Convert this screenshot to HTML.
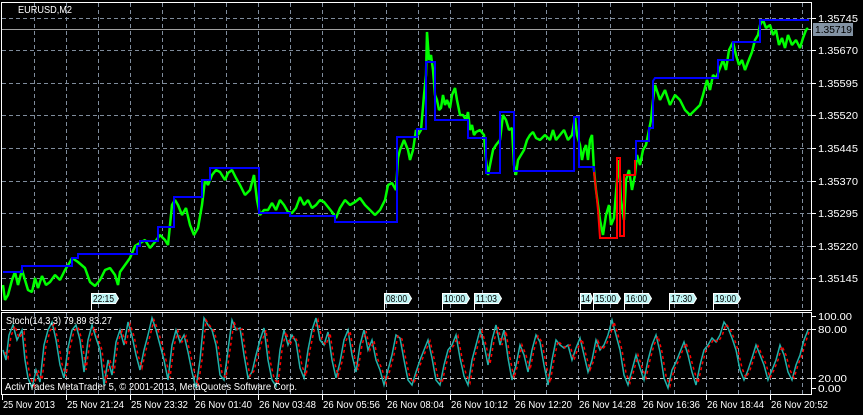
<!DOCTYPE html>
<html><head><meta charset="utf-8"><style>
body{margin:0;background:#000;width:863px;height:415px;overflow:hidden;font-family:"Liberation Sans",sans-serif}
svg{display:block}
text{font-family:"Liberation Sans",sans-serif;font-size:10px;fill:#fff}
</style></head><body>
<svg width="863" height="415" xmlns="http://www.w3.org/2000/svg">
<rect width="863" height="415" fill="#000"/>
<g stroke="#7f8c9c" stroke-dasharray="4,3" stroke-width="1">
<path d="M34.5 3V310M66.5 3V310M98.5 3V310M130.5 3V310M162.5 3V310M194.5 3V310M226.5 3V310M258.5 3V310M290.5 3V310M322.5 3V310M354.5 3V310M386.5 3V310M418.5 3V310M450.5 3V310M482.5 3V310M514.5 3V310M546.5 3V310M578.5 3V310M610.5 3V310M642.5 3V310M674.5 3V310M706.5 3V310M738.5 3V310M770.5 3V310M802.5 3V310"/>
<path d="M34.5 313V394M66.5 313V394M98.5 313V394M130.5 313V394M162.5 313V394M194.5 313V394M226.5 313V394M258.5 313V394M290.5 313V394M322.5 313V394M354.5 313V394M386.5 313V394M418.5 313V394M450.5 313V394M482.5 313V394M514.5 313V394M546.5 313V394M578.5 313V394M610.5 313V394M642.5 313V394M674.5 313V394M706.5 313V394M738.5 313V394M770.5 313V394M802.5 313V394"/>
<path d="M2 18.5H811M2 50.5H811M2 83.5H811M2 115.5H811M2 148.5H811M2 181.5H811M2 213.5H811M2 246.5H811M2 278.5H811"/>
</g>
<g stroke="#c8c8c8" stroke-dasharray="4,3"><path d="M2 329.5H811M2 378.5H811"/></g>
<path d="M2 29.5H811" stroke="#a0a0a0"/>
<polyline fill="none" stroke="#00ff00" stroke-width="2.5" stroke-linejoin="bevel" points="3,285 5,300 8,295 12,280 15,272 18,285 22,270 25,280 28,290 32,292 35,278 38,288 42,276 46,285 50,282 55,275 60,280 65,270 70,262 72,258 78,262 85,268 90,282 95,286 100,280 105,270 110,268 115,275 118,285 120,272 125,265 130,258 135,246 140,243 145,240 150,248 155,242 160,235 165,240 168,245 172,205 175,200 178,205 182,215 186,208 190,225 194,235 198,228 202,205 205,180 208,185 212,175 216,170 220,172 225,180 228,173 232,170 236,178 240,185 245,195 250,190 254,175 257,200 260,215 264,210 268,210 272,203 276,210 280,200 284,205 288,212 292,213 296,208 300,197 304,205 308,200 312,208 316,205 320,200 324,202 328,207 332,212 336,218 340,208 345,200 350,205 355,202 360,198 365,205 370,210 375,215 380,210 385,200 388,185 392,183 396,190 398,158 400,150 404,140 408,150 410,160 413,150 416,130 418,135 421,130 424,95 426,75 427,32 429,60 431,55 433,70 435,95 437,100 439,110 441,108 443,95 445,105 447,100 450,108 452,95 455,88 457,100 460,115 463,115 466,120 468,112 470,130 472,125 474,135 476,132 480,130 484,135 486,160 488,175 490,165 493,150 496,145 500,140 503,115 506,120 509,130 512,128 514,165 516,175 518,160 521,155 524,150 527,140 530,135 533,132 536,138 540,140 545,135 550,140 553,130 556,140 560,135 564,130 568,140 572,135 575,117 577,135 580,145 582,160 584,150 586,145 588,160 590,140 592,135 594,170 596,190 598,205 600,220 603,235 606,215 609,205 611,225 614,218 617,180 619,160 621,200 624,220 626,180 629,170 632,190 635,175 637,155 640,165 643,150 646,145 649,130 651,120 653,100 655,85 660,100 665,90 670,105 675,95 680,100 685,110 690,115 695,110 700,105 703,95 707,80 710,90 713,75 716,78 720,68 723,60 726,70 729,50 733,42 736,55 739,65 742,60 745,70 748,62 752,52 755,40 758,35 760,25 763,20 766,28 770,25 773,35 776,30 779,45 782,38 785,48 788,35 792,45 796,40 800,48 803,38 806,30 808,28"/>
<polyline fill="none" stroke="#0000ff" stroke-width="2" points="3,272 22,272 22,266 72,266 72,258 78,258 78,254 137,254 137,246 140,246 140,241 158,241 158,227 174,227 174,197 202,197 202,180 210,180 210,168 259,168 259,213 290,213 290,216 335,216 335,222 397,222 397,137 417,137 417,129 426,129 426,62 435,62 435,120 468,120 468,138 486,138 486,173 500,173 500,112 514,112 514,171 574,171 574,117 579,117 579,167 594,167 594,172"/>
<polyline fill="none" stroke="#ff0000" stroke-width="2" points="594,172 596,190 598,210 600,238 617,238 617,158 620,158 620,236 624,236 624,175 635,175 635,160"/>
<polyline fill="none" stroke="#0000ff" stroke-width="2" points="636,160 636,141 649,141 649,128 653,128 653,81 655,78 718,78 718,60 733,60 733,42 760,42 760,20 809,20"/>
<g stroke="#fff" fill="none"><rect x="1.5" y="2.5" width="810" height="308"/><rect x="1.5" y="312.5" width="810" height="82"/></g>
<g stroke="#fff" fill="none" stroke-width="1"><path d="M812 18.5h4M812 50.5h4M812 83.5h4M812 115.5h4M812 148.5h4M812 181.5h4M812 213.5h4M812 246.5h4M812 278.5h4M812 316.5h4M812 329.5h4M812 378.5h4M812 388.5h4"/></g>
<text x="18" y="13" textLength="54" lengthAdjust="spacingAndGlyphs">EURUSD,M2</text>
<g><text x="818" y="22" textLength="40" lengthAdjust="spacingAndGlyphs">1.35745</text><text x="818" y="54" textLength="40" lengthAdjust="spacingAndGlyphs">1.35670</text><text x="818" y="87" textLength="40" lengthAdjust="spacingAndGlyphs">1.35595</text><text x="818" y="119" textLength="40" lengthAdjust="spacingAndGlyphs">1.35520</text><text x="818" y="152" textLength="40" lengthAdjust="spacingAndGlyphs">1.35445</text><text x="818" y="185" textLength="40" lengthAdjust="spacingAndGlyphs">1.35370</text><text x="818" y="217" textLength="40" lengthAdjust="spacingAndGlyphs">1.35295</text><text x="818" y="250" textLength="40" lengthAdjust="spacingAndGlyphs">1.35220</text><text x="818" y="282" textLength="40" lengthAdjust="spacingAndGlyphs">1.35145</text>
<text x="818" y="320" textLength="34" lengthAdjust="spacingAndGlyphs">100.00</text><text x="818" y="333" textLength="29" lengthAdjust="spacingAndGlyphs">80.00</text><text x="818" y="382" textLength="29" lengthAdjust="spacingAndGlyphs">20.00</text><text x="818" y="392" textLength="23" lengthAdjust="spacingAndGlyphs">0.00</text></g>
<rect x="813" y="23" width="40" height="13" fill="#8393a4"/><text x="815" y="33" textLength="37" lengthAdjust="spacingAndGlyphs" style="fill:#000">1.35719</text>
<g fill="#bff4f4" stroke="#fff">
<path d="M91.5 293.5h24l3 5-3 5h-24z"/><path d="M384.5 293.5h24l3 5-3 5h-24z"/><path d="M442.5 293.5h24l3 5-3 5h-24z"/><path d="M474.5 293.5h24l3 5-3 5h-24z"/><path d="M580.5 293.5h10l2 5-2 5h-10z"/><path d="M593.5 293.5h24l3 5-3 5h-24z"/><path d="M624.5 293.5h24l3 5-3 5h-24z"/><path d="M669.5 293.5h24l3 5-3 5h-24z"/><path d="M713.5 293.5h24l3 5-3 5h-24z"/>
</g>
<g stroke="#fff"><path d="M91.5 303v8M384.5 303v8M442.5 303v8M474.5 303v8M580.5 303v8M593.5 303v8M624.5 303v8M669.5 303v8M713.5 303v8"/></g>
<g><text x="93" y="302" textLength="21" lengthAdjust="spacingAndGlyphs" style="fill:#000">22:15</text><text x="386" y="302" textLength="21" lengthAdjust="spacingAndGlyphs" style="fill:#000">08:00</text><text x="444" y="302" textLength="21" lengthAdjust="spacingAndGlyphs" style="fill:#000">10:00</text><text x="476" y="302" textLength="21" lengthAdjust="spacingAndGlyphs" style="fill:#000">11:03</text><text x="581" y="302" textLength="9" lengthAdjust="spacingAndGlyphs" style="fill:#000">14</text><text x="595" y="302" textLength="21" lengthAdjust="spacingAndGlyphs" style="fill:#000">15:00</text><text x="626" y="302" textLength="21" lengthAdjust="spacingAndGlyphs" style="fill:#000">16:00</text><text x="671" y="302" textLength="21" lengthAdjust="spacingAndGlyphs" style="fill:#000">17:30</text><text x="715" y="302" textLength="21" lengthAdjust="spacingAndGlyphs" style="fill:#000">19:00</text></g>
<polyline fill="none" stroke="#20b2aa" stroke-width="1.5" points="3,350 6,360 9,335 13,325 17,340 22,330 25,360 28,378 32,388 36,370 40,382 44,345 48,330 52,322 56,340 60,365 64,378 68,348 72,330 76,325 80,340 84,372 88,340 92,325 96,338 100,350 104,385 108,360 112,375 116,342 120,330 124,345 128,322 132,336 136,355 140,370 144,350 148,335 152,318 156,330 160,345 164,360 168,380 172,345 176,330 180,342 184,335 188,352 192,372 196,388 200,360 204,318 208,325 212,330 216,345 220,375 224,380 228,350 232,320 236,330 240,328 244,355 248,378 252,372 256,355 260,340 264,328 268,360 272,380 276,386 280,350 284,330 288,345 292,335 296,342 300,368 304,378 308,350 312,330 316,318 320,340 324,345 328,332 332,360 336,378 340,362 344,340 348,330 352,355 356,372 360,345 364,330 368,350 372,340 376,360 380,370 384,385 388,370 392,355 396,335 400,338 404,360 408,380 412,385 416,372 420,360 424,350 428,340 432,358 436,380 440,385 444,365 448,350 452,345 456,335 460,358 464,376 468,385 472,360 476,345 480,330 484,345 488,365 492,340 496,325 500,345 504,330 508,358 512,380 516,365 520,345 524,355 528,372 532,350 536,335 540,342 544,365 548,385 552,360 556,340 560,345 564,348 568,345 572,360 576,348 580,338 584,355 588,372 592,360 596,340 600,350 604,345 608,335 612,320 616,335 620,350 624,375 628,385 632,370 636,355 640,368 644,380 648,360 652,345 656,335 660,352 664,378 668,388 672,370 676,362 680,352 684,342 688,355 692,372 696,385 700,365 704,350 708,345 712,338 716,342 720,335 724,322 728,328 732,338 736,350 740,370 744,380 748,370 752,358 756,345 760,355 764,365 768,380 772,370 776,360 780,345 784,355 788,372 792,380 796,365 800,355 804,340 808,330"/>
<polyline fill="none" stroke="#ff0000" stroke-width="1.5" stroke-dasharray="3,3" points="5,352 8,358 11,336 15,326 19,338 24,332 27,360 30,376 34,386 38,370 42,380 46,346 50,331 54,324 58,340 62,364 66,376 70,348 74,331 78,327 82,340 86,370 90,341 94,327 98,338 102,350 106,383 110,360 114,373 118,342 122,331 126,345 130,324 134,336 138,355 142,368 146,350 150,336 154,320 158,330 162,345 166,360 170,378 174,346 178,331 182,342 186,336 190,352 194,370 198,386 202,360 206,320 210,326 214,331 218,345 222,373 226,378 230,350 234,322 238,331 242,329 246,355 250,376 254,371 258,355 262,341 266,330 270,360 274,378 278,384 282,350 286,332 290,345 294,336 298,342 302,366 306,376 310,350 314,331 318,320 322,340 326,345 330,333 334,360 338,376 342,362 346,341 350,331 354,355 358,370 362,345 366,331 370,350 374,341 378,360 382,369 386,383 390,370 394,355 398,336 402,339 406,360 410,378 414,383 418,371 422,360 426,350 430,341 434,358 438,378 442,383 446,365 450,351 454,345 458,336 462,358 466,374 470,383 474,360 478,345 482,331 486,345 490,364 494,341 498,327 502,345 506,331 510,358 514,378 518,364 522,345 526,355 530,370 534,350 538,336 542,342 546,364 550,383 554,360 558,341 562,345 566,348 570,345 574,360 578,348 582,339 586,355 590,370 594,360 598,341 602,350 606,345 610,336 614,322 618,335 622,350 626,373 630,383 634,370 638,355 642,367 646,378 650,360 654,345 658,336 662,352 666,376 670,386 674,370 678,362 682,352 686,343 690,355 694,370 698,383 702,365 706,350 710,345 714,339 718,342 722,336 726,324 730,329 734,338 738,350 742,368 746,378 750,370 754,358 758,346 762,355 766,364 770,378 774,370 778,360 782,346 786,355 790,370 794,378 798,365 802,355 806,341 809,332"/>
<text x="6" y="324" textLength="106" lengthAdjust="spacingAndGlyphs">Stoch(14,3,3) 79.89 83.27</text>
<text x="5" y="390" textLength="292" lengthAdjust="spacingAndGlyphs">ActivTrades MetaTrader 5, © 2001-2013, MetaQuotes Software Corp.</text>
<g stroke="#fff"><path d="M2.5 395v5M66.5 395v5M130.5 395v5M194.5 395v5M258.5 395v5M322.5 395v5M386.5 395v5M450.5 395v5M514.5 395v5M578.5 395v5M642.5 395v5M706.5 395v5M770.5 395v5"/></g>
<g><text x="3" y="408" textLength="52" lengthAdjust="spacingAndGlyphs">25 Nov 2013</text><text x="67" y="408" textLength="57" lengthAdjust="spacingAndGlyphs">25 Nov 21:24</text><text x="131" y="408" textLength="57" lengthAdjust="spacingAndGlyphs">25 Nov 23:32</text><text x="195" y="408" textLength="57" lengthAdjust="spacingAndGlyphs">26 Nov 01:40</text><text x="259" y="408" textLength="57" lengthAdjust="spacingAndGlyphs">26 Nov 03:48</text><text x="323" y="408" textLength="57" lengthAdjust="spacingAndGlyphs">26 Nov 05:56</text><text x="387" y="408" textLength="57" lengthAdjust="spacingAndGlyphs">26 Nov 08:04</text><text x="451" y="408" textLength="57" lengthAdjust="spacingAndGlyphs">26 Nov 10:12</text><text x="515" y="408" textLength="57" lengthAdjust="spacingAndGlyphs">26 Nov 12:20</text><text x="579" y="408" textLength="57" lengthAdjust="spacingAndGlyphs">26 Nov 14:28</text><text x="643" y="408" textLength="57" lengthAdjust="spacingAndGlyphs">26 Nov 16:36</text><text x="707" y="408" textLength="57" lengthAdjust="spacingAndGlyphs">26 Nov 18:44</text><text x="771" y="408" textLength="57" lengthAdjust="spacingAndGlyphs">26 Nov 20:52</text></g>
</svg>
</body></html>
